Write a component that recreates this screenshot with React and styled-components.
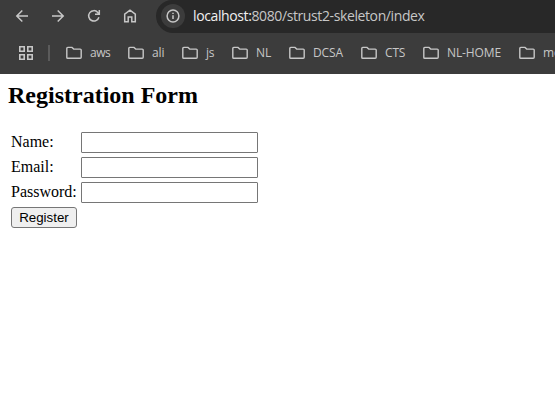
import React from 'react';
import styled, { createGlobalStyle } from 'styled-components';

const GlobalStyle = createGlobalStyle`
  * { box-sizing: border-box; }
  html, body { margin: 0; background: #fff; overflow: hidden; }
`;

const Browser = styled.div`
  width: 100%;
  height: 415px;
  overflow: hidden;
`;

const Chrome = styled.header`
  height: 74px;
  background: #3c3c3c;
  color: #c7c7c7;
  font-family: "Open Sans", "Noto Sans", sans-serif;
`;

const Toolbar = styled.nav`
  display: flex;
  height: 33px;
`;

const NavButtons = styled.div`
  display: flex;
  gap: 12px;
  width: 156px;
  padding: 4px 0 0 10px;
`;

const IconButton = styled.button`
  width: 24px;
  height: 24px;
  padding: 0;
  border: 0;
  background: none;
  color: inherit;
  svg { display: block; }
`;

const AddressBar = styled.div`
  flex: 1;
  display: flex;
  height: 33px;
  padding: 4px 0 0 5px;
  border-radius: 16px 0 0 17px;
  background: #282828;
`;

const SiteInfo = styled.span`
  width: 24px;
  height: 24px;
  border-radius: 50%;
  background: #3c3c3c;
  svg { display: block; }
`;

const Url = styled.span`
  margin-left: 8px;
  font-size: 14px;
  line-height: 24px;
  letter-spacing: -0.39px;
  white-space: nowrap;
`;

const Host = styled.span`
  color: #f0f0f0;
`;

const Bookmarks = styled.nav`
  display: flex;
  align-items: center;
  height: 41px;
  padding: 0 0 1px 18px;
  overflow: hidden;
`;

const AppsIcon = styled.svg`
  flex: none;
  display: block;
`;

const Divider = styled.span`
  flex: none;
  width: 2px;
  height: 16px;
  margin: 0 16px 0 14px;
  background: #5b5b5b;
`;

const Bookmark = styled.a`
  flex: none;
  display: flex;
  align-items: center;
  width: ${(p) => p.$width}px;
  svg { flex: none; margin-right: 8px; }
`;

const BookmarkLabel = styled.span`
  font-size: 12px;
  line-height: 18px;
  letter-spacing: ${(p) => p.$spacing}px;
  white-space: nowrap;
`;

const Page = styled.main`
  padding: 8px;
  color: #000;
  font-family: "Liberation Serif", "Times New Roman", serif;
`;

const Title = styled.h2`
  margin: 0 0 23px;
  font-size: 24px;
  line-height: 27px;
`;

const Form = styled.form`
  display: grid;
  grid-template-columns: 66px 177px;
  grid-auto-rows: 21px;
  gap: 4px;
  padding-left: 3px;
`;

const Label = styled.label`
  font-size: 16px;
  line-height: 19px;
  white-space: nowrap;
`;

const Input = styled.input`
  width: 177px;
  height: 21px;
  padding: 1px 2px;
  border: 1px solid #767676;
  border-radius: 1px;
  background: #fff;
  outline: none;
`;

const Submit = styled.button`
  width: 66px;
  height: 21px;
  padding: 0;
  border: 1px solid #767676;
  border-radius: 3px;
  background: #efefef;
  color: #000;
  font: 13.333px/19px "Liberation Sans", Arial, sans-serif;
`;

const Icon = ({ children }) => (
  <svg width="24" height="24" viewBox="0 0 24 24" fill="none" stroke="currentColor" strokeWidth="1.5">
    {children}
  </svg>
);

const Folder = () => (
  <svg width="16" height="14" viewBox="0 0 16 14" fill="none" stroke="currentColor" strokeWidth="1.4">
    <path d="M.8 11.5V2.4Q.8 1.4 1.8 1.4H6L7.7 3.1H14.2Q15.2 3.1 15.2 4.1V11.3Q15.2 12.3 14.2 12.3H1.7Q.8 12.3.8 11.5Z" />
  </svg>
);

const folders = [
  { name: 'aws', width: 62, spacing: -0.5 },
  { name: 'ali', width: 54, spacing: -0.1 },
  { name: 'js', width: 50, spacing: -0.2 },
  { name: 'NL', width: 57, spacing: -0.1 },
  { name: 'DCSA', width: 72, spacing: -0.15 },
  { name: 'CTS', width: 62, spacing: -0.15 },
  { name: 'NL-HOME', width: 96, spacing: -0.1 },
  { name: 'mo', width: 36, spacing: -0.2 },
];

const fields = [
  { id: 'name', label: 'Name:', type: 'text' },
  { id: 'email', label: 'Email:', type: 'text' },
  { id: 'password', label: 'Password:', type: 'password' },
];

export default function App() {
  return (
    <Browser>
      <GlobalStyle />
      <Chrome>
        <Toolbar>
          <NavButtons>
            <IconButton aria-label="Back">
              <Icon><path d="M18 12H7M12.3 6.5L6.8 12L12.3 17.5" /></Icon>
            </IconButton>
            <IconButton aria-label="Forward">
              <Icon><path d="M6 12H17M11.7 6.5L17.2 12L11.7 17.5" /></Icon>
            </IconButton>
            <IconButton aria-label="Reload">
              <Icon><path d="M16.9 13.2A5.2 5.2 0 1 1 15.8 8.4L17.3 10M17.3 6V10.3H13" /></Icon>
            </IconButton>
            <IconButton aria-label="Home">
              <Icon><path d="M6.7 17.8V10.1L12 6.1L17.3 10.1V17.8H13.8V13H10.2V17.8Z" /></Icon>
            </IconButton>
          </NavButtons>
          <AddressBar>
            <SiteInfo>
              <Icon>
                <circle cx="12" cy="12" r="5.9" />
                <path d="M12 11.2V15M12 8.7V10.1" />
              </Icon>
            </SiteInfo>
            <Url><Host>localhost:</Host>8080/strust2-skeleton/index</Url>
          </AddressBar>
        </Toolbar>
        <Bookmarks>
          <AppsIcon width="16" height="16" viewBox="0 0 16 16" fill="none" stroke="currentColor" strokeWidth="1.6">
            <path d="M1.8 1.8H6.2V6.2H1.8ZM9.8 1.8H14.2V6.2H9.8ZM1.8 9.8H6.2V14.2H1.8ZM9.8 9.8H14.2V14.2H9.8Z" />
          </AppsIcon>
          <Divider />
          {folders.map((f) => (
            <Bookmark key={f.name} $width={f.width}>
              <Folder />
              <BookmarkLabel $spacing={f.spacing}>{f.name}</BookmarkLabel>
            </Bookmark>
          ))}
        </Bookmarks>
      </Chrome>
      <Page>
        <Title>Registration Form</Title>
        <Form>
          {fields.map((f) => (
            <React.Fragment key={f.id}>
              <Label htmlFor={f.id}>{f.label}</Label>
              <Input id={f.id} type={f.type} />
            </React.Fragment>
          ))}
          <Submit type="button">Register</Submit>
        </Form>
      </Page>
    </Browser>
  );
}
